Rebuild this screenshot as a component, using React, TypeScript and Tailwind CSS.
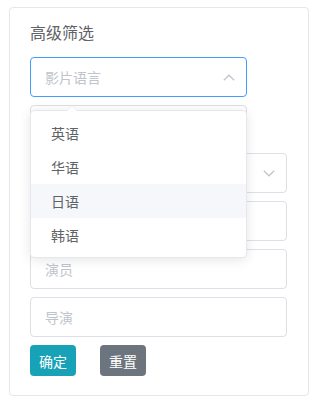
import React from "react";

const Up = () => (
  <svg width="12" height="7" viewBox="0 0 12 7" fill="none">
    <path d="M0.8 6.3 L6 1.2 L11.2 6.3" stroke="#c0c4cc" strokeWidth="1.2" />
  </svg>
);
const Down = () => (
  <svg width="12" height="7" viewBox="0 0 12 7" fill="none">
    <path d="M0.8 0.7 L6 5.8 L11.2 0.7" stroke="#c0c4cc" strokeWidth="1.2" />
  </svg>
);

function Input({ placeholder, w, focus, icon }: { placeholder?: string; w: string; focus?: boolean; icon?: React.ReactNode }) {
  return (
    <div
      className={`${w} h-[40px] rounded-[4px] border bg-white flex items-center pl-[14px] pr-[11px] ${
        focus ? "border-[#409eff]" : "border-[#dcdfe6]"
      }`}
    >
      <span className="flex-1 text-[14px] text-[#c0c4cc] leading-none">{placeholder}</span>
      {icon}
    </div>
  );
}

export default function App() {
  const items = ["英语", "华语", "日语", "韩语"];
  return (
    <div
      className="bg-white w-[323px] h-[403px] pt-[7px] pl-[9px]"
      style={{ fontFamily: '"Noto Sans CJK SC", "Noto Sans", sans-serif' }}
    >
      <div className="w-[300px] h-[389px] border border-[#e4e7ed] rounded-[4px] px-[20px] pt-[12px]">
        <div className="text-[16px] leading-[24px] text-[#606266]">高级筛选</div>
        <div className="mt-[13px] flex flex-col gap-[8px]">
          <div className="relative z-10">
            <Input placeholder="影片语言" w="w-[217px]" focus icon={<Up />} />
            <div className="absolute left-0 top-[53px] w-[217px] bg-white border border-[#e4e7ed] rounded-[4px] shadow-[0_2px_12px_rgba(0,0,0,0.1)] py-[5px]">
              <div className="absolute left-[35px] -top-[6px] w-0 h-0 border-l-[6px] border-r-[6px] border-b-[6px] border-l-transparent border-r-transparent border-b-[#e4e7ed]" />
              <div className="absolute left-[36px] -top-[5px] w-0 h-0 border-l-[5px] border-r-[5px] border-b-[5px] border-l-transparent border-r-transparent border-b-white" />
              {items.map((it) => (
                <div
                  key={it}
                  className={`h-[34px] flex items-center pl-[20px] text-[14px] text-[#606266] ${
                    it === "日语" ? "bg-[#f5f7fa]" : ""
                  }`}
                >
                  {it}
                </div>
              ))}
            </div>
          </div>
          <Input w="w-[217px]" />
          <Input w="w-[257px]" icon={<Down />} />
          <Input w="w-[257px]" />
          <Input placeholder="演员" w="w-[257px]" />
          <Input placeholder="导演" w="w-[257px]" />
          <div className="flex gap-[24px]">
            <button className="h-[31px] px-[9px] rounded-[4px] bg-[#17a2b8] text-white text-[14px] leading-none">确定</button>
            <button className="h-[31px] px-[9px] rounded-[4px] bg-[#6c757d] text-white text-[14px] leading-none">重置</button>
          </div>
        </div>
      </div>
    </div>
  );
}
